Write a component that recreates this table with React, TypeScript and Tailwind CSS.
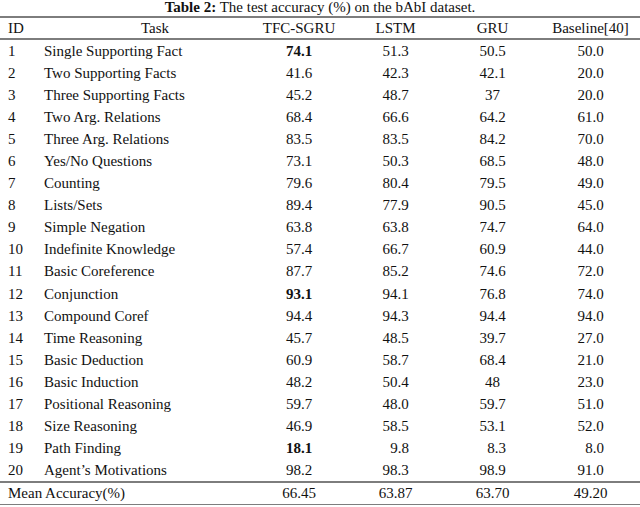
const rows: [string, string, string, string, string, string, boolean?][] = [
  ["1", "Single Supporting Fact", "74.1", "51.3", "50.5", "50.0", true],
  ["2", "Two Supporting Facts", "41.6", "42.3", "42.1", "20.0"],
  ["3", "Three Supporting Facts", "45.2", "48.7", "37", "20.0"],
  ["4", "Two Arg. Relations", "68.4", "66.6", "64.2", "61.0"],
  ["5", "Three Arg. Relations", "83.5", "83.5", "84.2", "70.0"],
  ["6", "Yes/No Questions", "73.1", "50.3", "68.5", "48.0"],
  ["7", "Counting", "79.6", "80.4", "79.5", "49.0"],
  ["8", "Lists/Sets", "89.4", "77.9", "90.5", "45.0"],
  ["9", "Simple Negation", "63.8", "63.8", "74.7", "64.0"],
  ["10", "Indefinite Knowledge", "57.4", "66.7", "60.9", "44.0"],
  ["11", "Basic Coreference", "87.7", "85.2", "74.6", "72.0"],
  ["12", "Conjunction", "93.1", "94.1", "76.8", "74.0", true],
  ["13", "Compound Coref", "94.4", "94.3", "94.4", "94.0"],
  ["14", "Time Reasoning", "45.7", "48.5", "39.7", "27.0"],
  ["15", "Basic Deduction", "60.9", "58.7", "68.4", "21.0"],
  ["16", "Basic Induction", "48.2", "50.4", "48", "23.0"],
  ["17", "Positional Reasoning", "59.7", "48.0", "59.7", "51.0"],
  ["18", "Size Reasoning", "46.9", "58.5", "53.1", "52.0"],
  ["19", "Path Finding", "18.1", "9.8", "8.3", "8.0", true],
  ["20", "Agent\u2019s Motivations", "98.2", "98.3", "98.9", "91.0"],
]

const grid = "grid grid-cols-[36px_215px_96px_97px_97px_99px]"

function Rule() {
  return <div className="h-[1.5px] bg-[#7d7d7d]" />
}

function Num({ v, bold }: { v: string; bold?: boolean }) {
  // short values sit a little right, as in the source table
  const shift = v.length === 3 ? "pl-[8px]" : ""
  return <div className={`text-center ${shift} ${bold ? "font-bold" : ""}`}>{v}</div>
}

export default function App() {
  return (
    <div
      className="w-[640px] h-[507px] bg-white text-[#111] text-[15px] overflow-hidden"
      style={{ fontFamily: '"Liberation Serif", "Times New Roman", serif' }}
    >
      <div className="h-[16px] leading-[15px] text-center">
        <span className="font-bold">Table 2:</span> The test accuracy (%) on the bAbI dataset.
      </div>
      <Rule />
      <div className={`${grid} h-[20.5px] leading-[20.5px]`}>
        <div className="pl-[8px]">ID</div>
        <div className="pl-[23px] text-center">Task</div>
        <div className="text-center">TFC-SGRU</div>
        <div className="text-center">LSTM</div>
        <div className="text-center">GRU</div>
        <div className="text-center">Baseline[40]</div>
      </div>
      <Rule />
      {rows.map(([id, task, a, b, c, d, bold]) => (
        <div key={id} className={`${grid} h-[22.1px] leading-[22.1px]`}>
          <div className="pl-[8px]">{id}</div>
          <div className="pl-[8px]">{task}</div>
          <Num v={a} bold={bold} />
          <Num v={b} />
          <Num v={c} />
          <Num v={d} />
        </div>
      ))}
      <Rule />
      <div className={`${grid} h-[21px] leading-[21px]`}>
        <div className="col-span-2 pl-[8px]">Mean Accuracy(%)</div>
        <Num v="66.45" />
        <Num v="63.87" />
        <Num v="63.70" />
        <Num v="49.20" />
      </div>
      <Rule />
    </div>
  )
}
